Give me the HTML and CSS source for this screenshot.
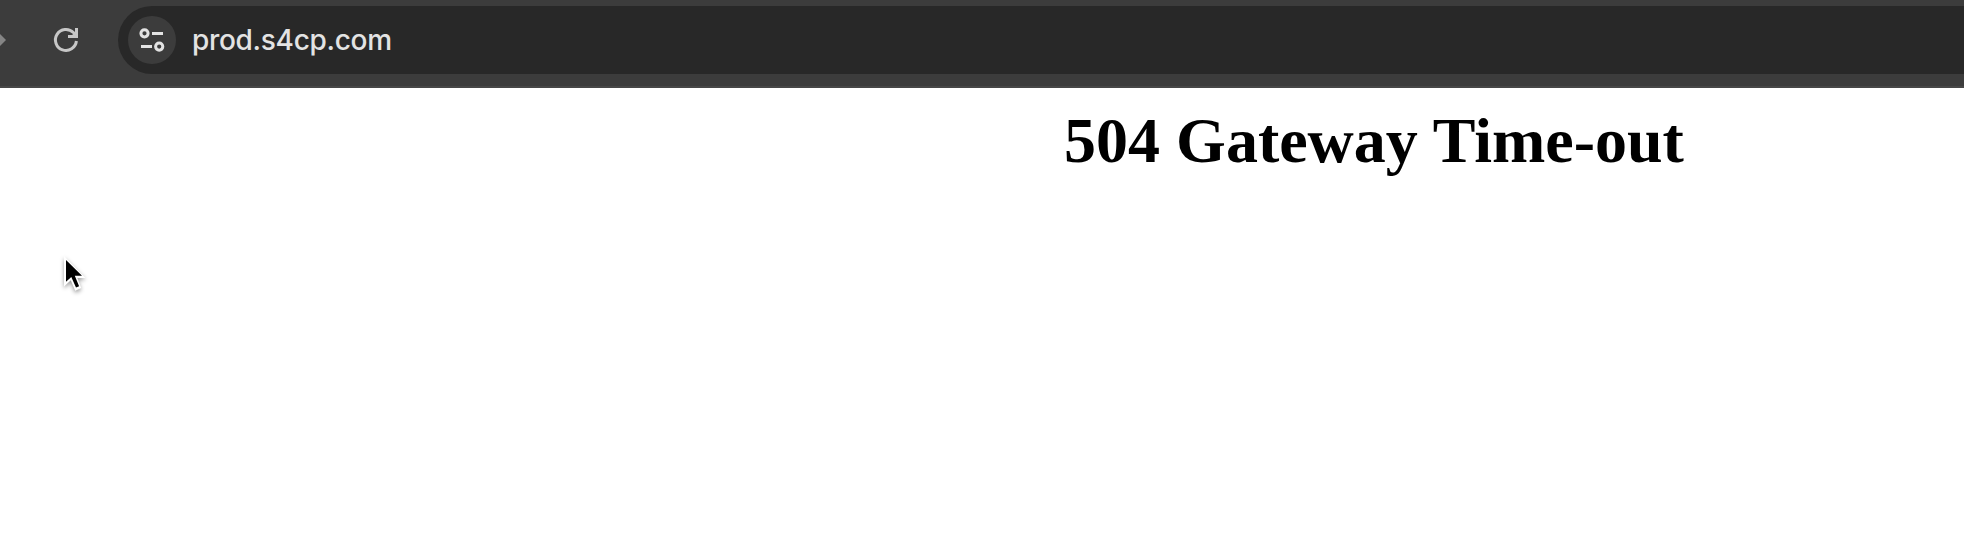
FILE: index.html
```html
<!DOCTYPE html>
<html lang="en">
<head>
<meta charset="utf-8">
<title>504 Gateway Time-out</title>
<link rel="stylesheet" href="styles.css">
</head>
<body>
<header class="toolbar">
  <svg class="forward" width="6" height="14" viewBox="0 0 6 14"><path d="M0 1L6 7L0 13Z" fill="#858585"/></svg>
  <svg class="reload" width="28" height="28" viewBox="0 0 28 28">
    <path d="M24.4 15A10.5 10.5 0 1 1 21.4 6.5L24 9" fill="none" stroke="#c7c7c7" stroke-width="3"/>
    <path d="M23 2H26V12H16V9H20L23 6.5Z" fill="#c7c7c7"/>
  </svg>
  <div class="address">
    <span class="site-info">
      <svg width="26" height="26" viewBox="0 0 26 26" fill="none" stroke="#e3e3e3" stroke-width="3">
        <circle cx="5.5" cy="6.3" r="3.6"/><path d="M13 6.5H24M2 19.5H13"/><circle cx="20.2" cy="19.6" r="3.6"/>
      </svg>
    </span>
    <span class="url">prod.s4cp.com</span>
  </div>
</header>
<main class="page">
  <h1 class="title">504 Gateway Time-out</h1>
</main>
<svg class="cursor" width="32" height="42" viewBox="0 0 32 42">
  <path d="M2 1V31.5L8.8 25.2L13.2 35.7L19.2 33L15.4 23H23.5Z" fill="#fff"/>
  <path d="M4 5V26.8L9.3 22L14 32.6L17.1 31.3L12.8 20.8H20Z" fill="#000"/>
</svg>
</body>
</html>
```
FILE: styles.css
```css
body {
  margin: 0;
  height: 538px;
  overflow: hidden;
  position: relative;
  background: #fff;
}
.toolbar {
  box-sizing: border-box;
  height: 88px;
  display: flex;
  align-items: flex-start;
  padding-top: 6px;
  background: #3c3c3c;
  border-bottom: 2px solid #474747;
}
.forward {
  flex: none;
  margin-top: 27px;
}
.reload {
  flex: none;
  margin: 20px 38px 0 46px;
}
.address {
  flex: 1;
  box-sizing: border-box;
  height: 68px;
  display: flex;
  align-items: center;
  padding-left: 10px;
  border-radius: 34px 0 0 34px;
  background: #282828;
}
.site-info {
  width: 48px;
  height: 48px;
  border-radius: 50%;
  display: flex;
  align-items: center;
  justify-content: center;
  background: #3c3c3c;
}
.url {
  margin-left: 16px;
  font: 500 28px/34px Inter, sans-serif;
  letter-spacing: -0.3px;
  color: #e3e3e3;
}
.page {
  padding: 16px 0 0 784px;
}
.title {
  margin: 0;
  font: bold 64px/74px "Liberation Serif", serif;
  text-align: center;
  color: #000;
}
.cursor {
  position: absolute;
  left: 62px;
  top: 255px;
  filter: drop-shadow(0 2px 2px rgba(0, 0, 0, 0.4));
}
```
